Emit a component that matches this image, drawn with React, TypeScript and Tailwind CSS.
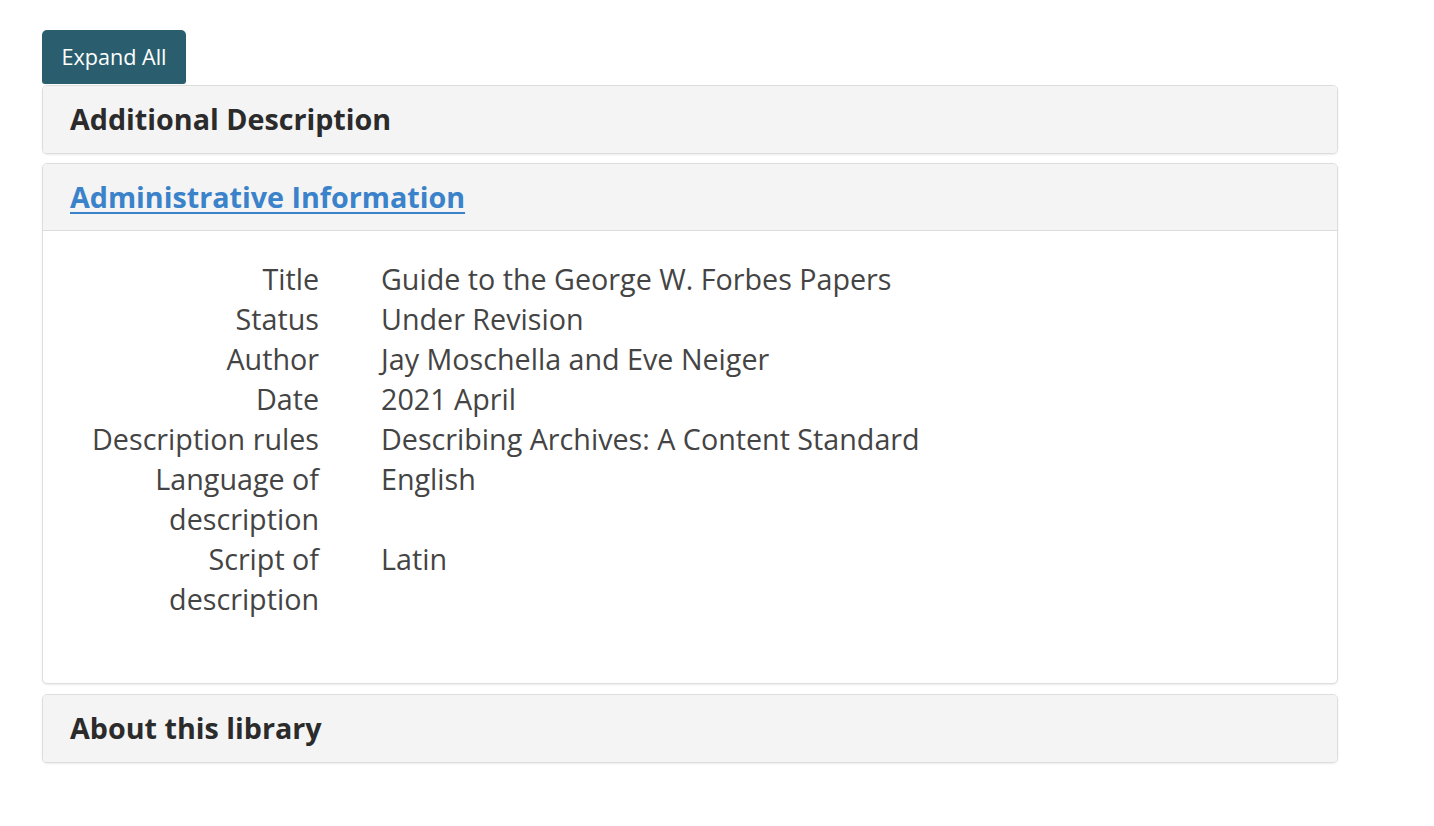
import React from 'react';

const rows: [string, string][] = [
  ['Title', 'Guide to the George W. Forbes Papers'],
  ['Status', 'Under Revision'],
  ['Author', 'Jay Moschella and Eve Neiger'],
  ['Date', '2021 April'],
  ['Description rules', 'Describing Archives: A Content Standard'],
  ['Language of description', 'English'],
  ['Script of description', 'Latin'],
];

const Panel: React.FC<{ title: string; open?: boolean; children?: React.ReactNode }> = ({ title, open, children }) => (
  <div className="rounded-[5px] border border-[#dddddd] bg-white shadow-[0_1px_2px_rgba(0,0,0,0.08)] overflow-hidden">
    <div className={`bg-[#f4f4f4] h-[67px] flex items-center px-[27px] pb-[1px] ${open ? 'border-b border-[#dddddd]' : ''}`}>
      {open ? (
        <a href="#" className="text-[28.7px] font-bold text-[#3a82c9] underline decoration-[2px] underline-offset-[4px]">
          {title}
        </a>
      ) : (
        <h3 className="text-[28.7px] font-bold text-[#2b2b2b]">{title}</h3>
      )}
    </div>
    {children}
  </div>
);

export default function App() {
  return (
    <div className="min-h-screen bg-white font-['Open_Sans',sans-serif] text-[#444444] pl-[42px] pt-[30px] w-[1338px]">
      <button className="bg-[#2a5e6e] text-white text-[21.6px] leading-none rounded-t-[5px] rounded-b-[3px] w-[144px] h-[54px]">
        Expand All
      </button>
      <div className="flex flex-col gap-[9px] mt-[1px]">
        <Panel title="Additional Description" />
        <Panel title="Administrative Information" open>
          <dl className="pt-[28px] pb-[64px] px-[27px] text-[28.7px] leading-[40px]">
            {rows.map(([label, value]) => (
              <div key={label} className="flex">
                <dt className="w-[249px] text-right shrink-0">{label}</dt>
                <dd className="ml-[62px]">{value}</dd>
              </div>
            ))}
          </dl>
        </Panel>
        <div className="mt-[1px]">
          <Panel title="About this library" />
        </div>
      </div>
    </div>
  );
}
